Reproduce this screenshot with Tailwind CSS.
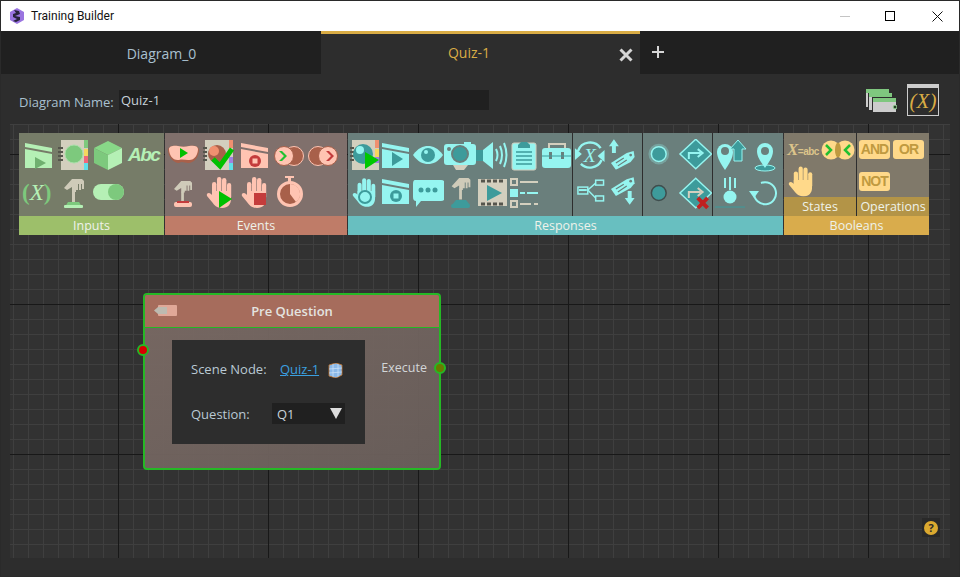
<!DOCTYPE html>
<html lang="en">
<head>
<meta charset="UTF-8">
<title>Training Builder</title>
<script src="https://cdn.jsdelivr.net/npm/@tailwindcss/browser@4"></script>
</head>
<body class="bg-[#2d2d2d] overflow-hidden">
<!-- shared icon parts -->
<svg class="absolute w-0 h-0">
  <defs>
    <symbol id="clapper" viewBox="0 0 28 28">
      <path d="M0 8 27 13V27H0Z" fill="currentColor"/>
      <path d="M0 2 27 7V11L0 6Z" fill="currentColor"/>
    </symbol>
    <symbol id="hand" viewBox="0 0 26 32">
      <g fill="currentColor">
        <rect x="6" y="6" width="4.4" height="18" rx="2.2"/>
        <rect x="11" y="1" width="4.4" height="20" rx="2.2"/>
        <rect x="16" y="2" width="4.4" height="20" rx="2.2"/>
        <rect x="21" y="7" width="4.2" height="16" rx="2.1"/>
        <path d="M6 15H25V23C25 28 22 32 16 32 11 32 8 29 6 26L1 20C0 17 3 16 5 18L6 19Z"/>
      </g>
    </symbol>
    <symbol id="joystick" viewBox="0 0 20 32">
      <path d="M0 11 8 2H18L20 4V12H18V7H17V13H15V7H14V13H12V15H8V10L3 13Z" fill="#cfcbb9"/>
      <rect x="8" y="14" width="3" height="11" fill="#cfcbb9"/>
    </symbol>
    <symbol id="tag" viewBox="0 0 26 20">
      <path d="M1 13 17 3 24 1 25 7 21 12 6 20Z" fill="currentColor"/>
      <path d="M6 13 14 8M8 16 17 10" stroke="#6a7f7c" stroke-width="1.2"/>
      <circle cx="21" cy="5" r="1.4" fill="#6a7f7c"/>
    </symbol>
  </defs>
</svg>

<div class="w-[960px] h-[577px] flex flex-col border border-[#2a2a2a] font-['Open_Sans',sans-serif]">

  <!-- title bar -->
  <div class="h-[30px] bg-white flex items-center shrink-0">
    <svg class="ml-[8px] w-[16px] h-[16px]" viewBox="0 0 16 16">
      <path d="M8 0 15 4V12L8 16 1 12V4Z" fill="#9a74e0"/>
      <path d="M5 2 10 3 11 6 6 8 11 9 11 12 7 14 4 13 8 11 4 9 4 6 7 5Z" fill="#26223a"/>
    </svg>
    <span class="ml-[6px] text-[12px] text-[#111] font-['Roboto',sans-serif]">Training Builder</span>
    <div class="ml-auto flex items-center">
      <div class="w-[10px] h-px bg-[#c4c4c4]"></div>
      <div class="ml-[35px] w-[10px] h-[10px] border border-black"></div>
      <svg class="ml-[37px] mr-[16px] w-[11px] h-[11px]" viewBox="0 0 11 11"><path d="M.5.5 10.5 10.5M10.5.5.5 10.5" stroke="#111" stroke-width="1"/></svg>
    </div>
  </div>

  <!-- tabs -->
  <div class="h-[43px] bg-[#202020] flex shrink-0 pl-px">
    <div class="w-[319px] pt-px flex items-center justify-center text-[14px] text-[#a9c0d0]">Diagram_0</div>
    <div class="relative w-[319px] bg-[#2d2d2d] border-t-[3px] border-[#d9ac45] pr-[23px] pb-[3px] flex items-center justify-center text-[14px] text-[#d9ac45]">
      Quiz-1
      <svg class="absolute right-[7px] top-[14px] w-[14px] h-[14px]" viewBox="0 0 14 14"><path d="M1.500 1.500 12.500 12.500M12.500 1.500 1.500 12.500" stroke="#d6d6d6" stroke-width="3"/></svg>
    </div>
    <svg class="ml-[11px] mt-[14px] w-[14px] h-[14px]" viewBox="0 0 14 14"><path d="M7 1V13M1 7H13" stroke="#d6d6d6" stroke-width="2"/></svg>
  </div>

  <!-- diagram name row -->
  <div class="h-[50px] flex shrink-0 pl-[18px] pr-[20px] relative">
    <span class="mt-[19px] text-[13px] leading-[18px] text-[#a9c0d0]">Diagram Name:</span>
    <div class="absolute left-[118px] top-[16px] w-[370px] h-[20px] bg-[#202020] pl-[2px] text-[13px] leading-[20px] text-[#c6d2da]">Quiz-1</div>
    <div class="ml-auto flex">
      <svg class="mt-[15px] w-[31px] h-[24px]" viewBox="0 0 31 24">
        <rect x="0" y="0" width="23" height="18" fill="#ccc"/><rect x="0" y="0" width="23" height="4" fill="#7fc77f"/>
        <rect x="2" y="4" width="24" height="16" fill="#2d2d2d"/>
        <rect x="3" y="4" width="23" height="17" fill="#ccc"/><rect x="3" y="4" width="23" height="4" fill="#7fc77f"/>
        <rect x="6" y="8" width="25" height="16" fill="#2d2d2d"/>
        <rect x="7" y="9" width="23" height="14" fill="#ccc"/><rect x="7" y="9" width="23" height="4" fill="#7fc77f"/>
        <circle cx="29" cy="18" r="2" fill="#264026" stroke="#a5e0a5"/>
      </svg>
      <div class="ml-[10px] mt-[10px] w-[32px] h-[32px] border border-[#ccc] border-t-[4px] flex items-center justify-center text-[#d9ac45] font-['Liberation_Serif',serif] italic text-[21px] leading-none">(X)</div>
    </div>
  </div>

  <!-- diagram canvas -->
  <div class="relative ml-[9px] w-[940px] h-[434px] shrink-0 bg-[#323232] bg-[linear-gradient(#181818_1px,transparent_1px),linear-gradient(90deg,#181818_1px,transparent_1px),linear-gradient(#3f3f3f_1px,transparent_1px),linear-gradient(90deg,#3f3f3f_1px,transparent_1px)] bg-[size:150px_150px,150px_150px,15px_15px,15px_15px] bg-[position:0_30px,108px_0,0_0,3px_0]">

    <!-- palette -->
    <div class="ml-[9px] pt-[9px] flex w-[910px] text-[12.5px] text-[#eef2ea]">

      <!-- inputs -->
      <div class="w-[145px] mr-px flex flex-col">
        <div class="h-[83px] bg-[#767c68] pl-[3px] pt-[6px]">
          <div class="flex h-[36px]">
            <svg class="w-[35px] h-[36px]" viewBox="0 0 35 36"><use href="#clapper" x="3" y="2" width="28" height="28" color="#b5f0b5"/><path d="M13 18 24 24 13 30Z" fill="#6fb06f"/></svg>
            <svg class="w-[35px] h-[36px]" viewBox="0 0 35 36"><rect x="4" y="1" width="27" height="30" fill="#d3cfbe"/><path d="M1 9H6M1 13H6M1 17H6M1 21H6" stroke="#55554c" stroke-width="2"/><circle cx="17" cy="15" r="9" fill="#7dc97d" stroke="#a8dfa8"/><rect x="27" y="1" width="4" height="8" fill="#7dc97d"/><rect x="27" y="10" width="4" height="7" fill="#f5d75e"/><rect x="27" y="17" width="4" height="7" fill="#f0667a"/><rect x="27" y="24" width="4" height="7" fill="#5ee0ea"/></svg>
            <svg class="w-[35px] h-[36px]" viewBox="0 0 35 36"><path d="M16 2 30 9 16 16 2 9Z" fill="#88d888"/><path d="M2 9 16 16V31L2 24Z" fill="#7dc97d"/><path d="M30 9 16 16V31L30 24Z" fill="#b5f0b5"/></svg>
            <span class="w-[35px] pl-px pt-px text-[19px] leading-[30px] font-bold italic tracking-[-1.5px] text-[#b5f0b5] font-['Liberation_Sans',sans-serif]">Abc</span>
          </div>
          <div class="flex h-[36px]">
            <span class="w-[35px] pt-[3px] text-[23px] leading-[30px] text-[#b5f0b5] font-['Liberation_Serif',serif] italic whitespace-nowrap"><span class="text-[#7dc97d] font-bold not-italic">(</span>X<span class="text-[#7dc97d] font-bold not-italic">)</span></span>
            <svg class="w-[35px] h-[36px]" viewBox="0 0 35 36"><use href="#joystick" x="7" y="2" width="20" height="32"/><path d="M11 27H22L25 32H8Z" fill="#7dc97d"/><rect x="7" y="30" width="19" height="3" rx="1" fill="#b5f0b5"/></svg>
            <svg class="w-[35px] h-[36px]" viewBox="0 0 35 36"><rect x="1" y="9" width="31" height="16" rx="8" fill="#b5f0b5"/><circle cx="24" cy="17" r="8" fill="#7dc97d"/></svg>
          </div>
        </div>
        <div class="h-[19px] bg-[#9dbf6a] text-center leading-[19px]">Inputs</div>
      </div>

      <!-- events -->
      <div class="w-[182px] mr-px flex flex-col">
        <div class="h-[83px] bg-[#80706c] pl-px pt-[6px]">
          <div class="flex h-[36px]">
            <svg class="w-[35px] h-[36px]" viewBox="0 0 35 36"><path d="M2 11C2 7 8 6 12 7 16 8 19 8 23 7 28 6 33 7 33 11 33 17 29 24 22 24 19 24 16 22 13 24 7 24 2 17 2 11Z" fill="#a8604a"/><path d="M3 10C3 7 8 6 12 7 16 8 19 8 23 7 28 6 32 7 32 10 32 16 28 22 22 21 19 21 16 20 13 21 7 22 3 16 3 10Z" fill="#ffc4b2"/><path d="M14 9 22 14 14 19Z" fill="#00c000"/></svg>
            <svg class="w-[35px] h-[36px]" viewBox="0 0 35 36"><rect x="4" y="1" width="28" height="30" fill="#d3cfbe"/><path d="M2 9H6M2 13H6M2 17H6M2 21H6" stroke="#55554c" stroke-width="2"/><circle cx="16" cy="15" r="9" fill="#a8604a"/><circle cx="13" cy="12" r="5" fill="#f09070"/><rect x="28" y="1" width="4" height="8" fill="#f09070"/><rect x="28" y="18" width="4" height="7" fill="#a080e0"/><rect x="28" y="24" width="4" height="7" fill="#5ee0ea"/><path d="M12 20 19 27 31 10" fill="none" stroke="#00c000" stroke-width="5"/></svg>
            <svg class="w-[35px] h-[36px]" viewBox="0 0 35 36"><use href="#clapper" x="5" y="2" width="28" height="28" color="#ffc4b2"/><circle cx="19" cy="22" r="6" fill="#c43c3c"/><rect x="16.500" y="19.500" width="5" height="5" fill="#ffc4b2"/></svg>
            <svg class="w-[35px] h-[36px]" viewBox="0 0 35 36"><circle cx="23" cy="17" r="9.500" fill="#a8604a" stroke="#ffc4b2"/><circle cx="13" cy="17" r="9.500" fill="#ffc4b2" stroke="#a8604a"/><path d="M8 12H11L16 17 11 22H8L13 17Z" fill="#22c030"/></svg>
            <svg class="w-[35px] h-[36px]" viewBox="0 0 35 36"><circle cx="12" cy="17" r="9.500" fill="#a8604a" stroke="#ffc4b2"/><circle cx="22" cy="17" r="9.500" fill="#ffc4b2" stroke="#a8604a"/><path d="M20 12H23L28 17 23 22H20L25 17Z" fill="#c43c3c"/></svg>
          </div>
          <div class="flex h-[36px]">
            <svg class="w-[35px] h-[36px]" viewBox="0 0 35 36"><use href="#joystick" x="8" y="4" width="18" height="29"/><rect x="8" y="27" width="18" height="5" rx="2" fill="#ffc4b2"/><rect x="11" y="26" width="12" height="2" fill="#c43c3c"/></svg>
            <svg class="w-[35px] h-[36px]" viewBox="0 0 35 36"><use href="#hand" x="5" y="1" width="26" height="32" color="#ffc4b2"/><path d="M18 16 31 24 18 33Z" fill="#00c000"/></svg>
            <svg class="w-[35px] h-[36px]" viewBox="0 0 35 36"><use href="#hand" x="5" y="1" width="26" height="32" color="#ffc4b2"/><rect x="18" y="18" width="12" height="12" fill="#c43c3c"/></svg>
            <svg class="w-[35px] h-[36px]" viewBox="0 0 35 36"><rect x="14" y="1" width="9" height="2" fill="#ffc4b2"/><rect x="17" y="3" width="3" height="4" fill="#ffc4b2"/><circle cx="19" cy="19" r="11.500" fill="#a8604a" stroke="#ffc4b2" stroke-width="3"/><path d="M19 19V9A10 10 0 0 1 25 27Z" fill="#ffc4b2"/></svg>
          </div>
        </div>
        <div class="h-[19px] bg-[#bf7c68] text-center leading-[19px]">Events</div>
      </div>

      <!-- responses -->
      <div class="w-[435px] mr-px flex flex-col">
        <div class="h-[83px] bg-[#6a7f7c] flex">
          <div class="w-[225px] pt-[6px] border-r border-[#2d2d2d]">
            <div class="flex h-[36px]">
              <svg class="w-[32px] h-[36px]" viewBox="0 0 32 36"><rect x="4" y="1" width="27" height="30" fill="#d3cfbe"/><path d="M2 9H6M2 13H6M2 17H6M2 21H6" stroke="#55554c" stroke-width="2"/><circle cx="15" cy="15" r="10" fill="#3d9b9b"/><circle cx="12" cy="11" r="4" fill="#95f5f0"/><rect x="27" y="1" width="4" height="8" fill="#f09070"/><rect x="27" y="10" width="4" height="8" fill="#f5d75e"/><rect x="27" y="18" width="4" height="6" fill="#a080e0"/><path d="M17 13 31 21 17 30Z" fill="#00c800"/></svg>
              <svg class="w-[32px] h-[36px]" viewBox="0 0 32 36"><use href="#clapper" x="2" y="2" width="28" height="28" color="#95f5f0"/><path d="M12 13 23 20 12 27Z" fill="#3d9b9b"/></svg>
              <svg class="w-[32px] h-[36px]" viewBox="0 0 32 36"><path d="M1 16C6 9 11 7 16 7S26 9 31 16C26 23 21 25 16 25S6 23 1 16Z" fill="#95f5f0"/><circle cx="16" cy="16" r="7" fill="#3d9b9b"/><circle cx="14" cy="13" r="2" fill="#95f5f0"/></svg>
              <svg class="w-[32px] h-[36px]" viewBox="0 0 32 36"><rect x="20" y="3" width="7" height="3" fill="#95f5f0"/><rect x="0" y="5" width="32" height="21" rx="3" fill="#95f5f0"/><circle cx="16" cy="15" r="8" fill="#3d9b9b" stroke="#6a7f7c" stroke-width="2"/><circle cx="5" cy="10" r="2" fill="#6a7f7c"/><path d="M9 26H24L20 31H12Z" fill="#d3cfbe"/></svg>
              <svg class="w-[32px] h-[36px]" viewBox="0 0 32 36"><rect x="0" y="11" width="7" height="11" fill="#3d9b9b"/><path d="M7 11 17 3V30L7 22Z" fill="#95f5f0"/><path d="M20 10Q23 16 20 22M24 7Q28 16 24 25M28 4Q33 16 28 28" fill="none" stroke="#95f5f0" stroke-width="2"/></svg>
              <svg class="w-[32px] h-[36px]" viewBox="0 0 32 36"><rect x="4" y="4" width="24" height="27" rx="2" fill="#95f5f0" stroke="#d3cfbe"/><path d="M10 6 13 3H19L22 6V9H10Z" fill="#3d9b9b"/><path d="M8 13H24M8 17H24M8 21H24M8 25H24" stroke="#3d9b9b" stroke-width="1.500"/></svg>
              <svg class="w-[32px] h-[36px]" viewBox="0 0 32 36"><path d="M9 10V5H25V10" fill="none" stroke="#d3cfbe" stroke-width="2"/><rect x="2" y="9" width="29" height="20" rx="3" fill="#95f5f0"/><rect x="9" y="13" width="3" height="7" fill="#6a7f7c"/><rect x="21" y="13" width="3" height="7" fill="#6a7f7c"/><path d="M2 17H31" stroke="#3d9b9b"/></svg>
            </div>
            <div class="flex h-[36px]">
              <svg class="w-[32px] h-[36px]" viewBox="0 0 32 36"><use href="#hand" x="4" y="1" width="24" height="32" color="#95f5f0"/><circle cx="17" cy="22" r="6" fill="none" stroke="#3d9b9b" stroke-width="2"/></svg>
              <svg class="w-[32px] h-[36px]" viewBox="0 0 32 36"><use href="#clapper" x="2" y="2" width="28" height="28" color="#95f5f0"/><circle cx="16" cy="21" r="6" fill="#3d9b9b"/><rect x="13.500" y="18.500" width="5" height="5" fill="#95f5f0"/></svg>
              <svg class="w-[32px] h-[36px]" viewBox="0 0 32 36"><path d="M3 5H29Q33 5 33 9V22Q33 26 29 26H9L4 32V26Q1 26 1 22V9Q1 5 3 5Z" fill="#95f5f0"/><circle cx="9" cy="15" r="2.500" fill="#3d9b9b"/><circle cx="16" cy="15" r="2.500" fill="#3d9b9b"/><circle cx="23" cy="15" r="2.500" fill="#3d9b9b"/></svg>
              <svg class="w-[32px] h-[36px]" viewBox="0 0 32 36"><use href="#joystick" x="7" y="1" width="20" height="30"/><path d="M12 25H22L26 30H8Z" fill="#3d9b9b"/><rect x="7" y="29" width="19" height="4" rx="2" fill="#3d9b9b"/></svg>
              <svg class="w-[32px] h-[36px]" viewBox="0 0 32 36"><rect x="2" y="4" width="29" height="27" fill="#d3cfbe"/><path d="M5 6H28M5 29H28" stroke="#55554c" stroke-width="3" stroke-dasharray="4 2"/><path d="M11 10 26 18 11 26Z" fill="#3d9b9b"/></svg>
              <svg class="w-[32px] h-[36px]" viewBox="0 0 32 36"><rect x="3" y="4" width="6" height="6" fill="none" stroke="#d3cfbe" stroke-width="2"/><rect x="12" y="6" width="18" height="2" fill="#d3cfbe"/><rect x="2" y="14" width="8" height="8" fill="#95f5f0"/><rect x="12" y="17" width="5" height="2" fill="#95f5f0"/><rect x="19" y="17" width="11" height="2" fill="#95f5f0"/><rect x="3" y="26" width="6" height="6" fill="none" stroke="#d3cfbe" stroke-width="2"/><rect x="12" y="28" width="11" height="2" fill="#d3cfbe"/><rect x="26" y="28" width="4" height="2" fill="#d3cfbe"/></svg>
            </div>
          </div>
          <div class="w-[70px] pt-[6px] border-r border-[#2d2d2d]">
            <div class="flex h-[36px]">
              <svg class="w-[35px] h-[36px]" viewBox="0 0 35 36"><path d="M5 12A13 13 0 0 1 28 9M29 21A13 13 0 0 1 8 25" fill="none" stroke="#95f5f0" stroke-width="2.500"/><path d="M2 9V21L9 15ZM32 11V23L25 17Z" fill="#95f5f0"/><text x="17" y="23" text-anchor="middle" font-family="Liberation Serif" font-style="italic" font-size="20" fill="#95f5f0">X</text></svg>
              <svg class="w-[35px] h-[36px]" viewBox="0 0 35 36"><path d="M6 0 11 7H8V14H4V7H1Z" fill="#95f5f0"/><use href="#tag" x="2" y="11" width="26" height="20" color="#95f5f0"/></svg>
            </div>
            <div class="flex h-[36px]">
              <svg class="w-[35px] h-[36px]" viewBox="0 0 35 36"><g fill="none" stroke="#95f5f0" stroke-width="1.500"><rect x="5" y="12" width="10" height="7"/><rect x="23" y="5" width="8" height="5"/><rect x="23" y="21" width="8" height="5"/><path d="M15 15 23 8M15 15 23 23"/></g><rect x="6" y="14" width="8" height="2" fill="#95f5f0"/></svg>
              <svg class="w-[35px] h-[36px]" viewBox="0 0 35 36"><use href="#tag" x="2" y="1" width="26" height="20" color="#95f5f0"/><path d="M22 30 27 23H24V16H20V23H17Z" fill="#95f5f0"/></svg>
            </div>
          </div>
          <div class="w-[70px] pt-[6px] border-r border-[#2d2d2d]">
            <div class="flex h-[36px]">
              <svg class="w-[35px] h-[36px]" viewBox="0 0 35 36"><circle cx="16" cy="15" r="10.500" fill="#95f5f0" opacity=".3"/><circle cx="16" cy="15" r="7.500" fill="#3d9b9b" stroke="#95f5f0" stroke-width="1.500"/></svg>
              <svg class="w-[35px] h-[36px]" viewBox="0 0 35 36"><path d="M18 0 34 15 18 30 2 15Z" fill="#3d9b9b" stroke="#95f5f0" stroke-width="1.500"/><path d="M11 20V14H23M20 10 25 14 20 18" fill="none" stroke="#95f5f0" stroke-width="2"/></svg>
            </div>
            <div class="flex h-[36px]">
              <svg class="w-[35px] h-[36px]" viewBox="0 0 35 36"><circle cx="16" cy="18" r="7.500" fill="#3d9b9b" stroke="#3f4d4d" stroke-width="1.500"/></svg>
              <svg class="w-[35px] h-[36px]" viewBox="0 0 35 36"><path d="M18 3 34 18 18 33 2 18Z" fill="#3d9b9b" stroke="#95f5f0" stroke-width="1.500"/><path d="M11 23V17H23M20 13 25 17 20 21" fill="none" stroke="#d3cfbe" stroke-width="2"/><path d="M20 23 30 33M30 23 20 33" stroke="#c02020" stroke-width="4"/></svg>
            </div>
          </div>
          <div class="w-[70px] pt-[6px]">
            <div class="flex h-[36px]">
              <svg class="w-[35px] h-[36px]" viewBox="0 0 35 36"><path d="M12 31C8 25 4 19 4 13A8 8 0 0 1 20 13C20 19 16 25 12 31Z" fill="#95f5f0"/><circle cx="12" cy="12" r="4" fill="#6a7f7c"/><path d="M25 1 33 10H29V22H21V10H17Z" fill="#3d9b9b" stroke="#95f5f0"/></svg>
              <svg class="w-[35px] h-[36px]" viewBox="0 0 35 36"><ellipse cx="17" cy="29" rx="10" ry="3" fill="#3d9b9b" stroke="#95f5f0"/><path d="M17 29C13 23 9 18 9 12A8 8 0 0 1 25 12C25 18 21 23 17 29Z" fill="#95f5f0"/><circle cx="17" cy="12" r="4" fill="#6a7f7c"/></svg>
            </div>
            <div class="flex h-[36px]">
              <svg class="w-[35px] h-[36px]" viewBox="0 0 35 36"><path d="M12 3V13M17 2V15M22 3V13" stroke="#95f5f0" stroke-width="2"/><circle cx="17" cy="22" r="6.500" fill="#95f5f0"/><path d="M2 32H32" stroke="#3d9b9b"/></svg>
              <svg class="w-[35px] h-[36px]" viewBox="0 0 35 36"><path d="M6 18A11 11 0 1 0 13 8" fill="none" stroke="#95f5f0" stroke-width="2"/><path d="M1 16H11L6 23Z" fill="#95f5f0"/></svg>
            </div>
          </div>
        </div>
        <div class="h-[19px] bg-[#68bfc0] text-center leading-[19px]">Responses</div>
      </div>

      <!-- booleans -->
      <div class="w-[145px] flex flex-col">
        <div class="flex h-[83px]">
          <div class="w-[73px] border-r border-[#2d2d2d] flex flex-col">
            <div class="h-[64px] bg-[#80796a] pl-[3px] pt-[7px]">
              <div class="flex h-[20px]">
                <span class="w-[34px] whitespace-nowrap font-['Liberation_Sans',sans-serif] text-[#dcc48a] text-[10px] tracking-[-0.5px] leading-[20px] font-bold"><span class="text-[17px] italic font-['Liberation_Serif',serif]">X</span>=abc</span>
                <svg class="w-[34px] h-[20px]" viewBox="0 0 34 20"><circle cx="10" cy="10" r="9.500" fill="#ffd98a"/><circle cx="24" cy="10" r="9.500" fill="#ffd98a"/><ellipse cx="17" cy="10" rx="3" ry="7.500" fill="#c09a40"/><path d="M5 5 10 10 5 15M29 5 24 10 29 15" fill="none" stroke="#22c030" stroke-width="2.500"/></svg>
              </div>
              <svg class="ml-[1px] mt-[5px] w-[25px] h-[32px]" viewBox="0 0 26 32"><use href="#hand" width="26" height="32" color="#ffd98a"/></svg>
            </div>
            <div class="h-[19px] bg-[#b39447] text-center leading-[19px]">States</div>
          </div>
          <div class="flex-1 flex flex-col">
            <div class="h-[64px] bg-[#80796a] pl-[2px] pt-[7px] text-[#c09a40] font-['Liberation_Sans',sans-serif] font-bold text-[14px] tracking-[-1px] leading-[19px]">
              <div class="flex gap-[3px]">
                <div class="w-[31px] h-[19px] rounded-[3px] bg-[#ffd98a] text-center">AND</div>
                <div class="w-[31px] h-[19px] rounded-[3px] bg-[#ffd98a] text-center">OR</div>
              </div>
              <div class="mt-[13px] w-[31px] h-[19px] rounded-[3px] bg-[#ffd98a] text-center">NOT</div>
            </div>
            <div class="h-[19px] bg-[#b39447] text-center leading-[19px]">Operations</div>
          </div>
        </div>
        <div class="h-[19px] bg-[#d9ac4c] text-center leading-[19px]">Booleans</div>
      </div>
    </div>

    <!-- node -->
    <div class="absolute left-[133px] top-[169px] w-[298px] h-[177px] border-2 border-[#25b825] rounded-[4px] bg-linear-to-br from-[#7a6a64]/95 to-[#6a5f5b]/95">
      <div class="relative h-[33px] bg-[#a66c5c] border-b border-[#25b825] rounded-t-[2px] text-center text-[13px] font-semibold leading-[32px] text-[#e4e4e0]">
        Pre Question
        <svg class="absolute left-[9px] top-[9px] w-[24px] h-[13px]" viewBox="0 0 24 13"><rect x="4" y="1" width="19" height="11" rx="1" fill="#e0a898"/><path d="M0 6.500 4 3H13V10H4Z" fill="#bdbab0"/></svg>
      </div>
      <div class="absolute left-[27px] top-[45px] w-[193px] h-[104px] bg-[#2d2d2d] text-[13px] text-[#b9c9d4]">
        <div class="flex h-[22px] mt-[19px] pl-[19px] items-center">
          <span class="w-[89px]">Scene Node:</span>
          <span class="text-[#3ba0e0] underline">Quiz-1</span>
          <svg class="ml-[9px] w-[15px] h-[15px]" viewBox="0 0 15 15"><path d="M1 2 8 0 14 2V12L8 15 1 13Z" fill="#8ab8e8" stroke="#c87830" stroke-width=".8"/><path d="M5 1V14M10 1V14M1 6 14 5M1 10 14 9" stroke="#d0e4f8" stroke-width=".7"/></svg>
        </div>
        <div class="flex h-[21px] mt-[22px] pl-[19px] items-center">
          <span class="w-[81px] pt-[2px]">Question:</span>
          <div class="relative w-[73px] h-[21px] bg-[#202020] pl-[5px] leading-[23px] text-[#c6d2da]">
            Q1
            <svg class="absolute right-[3px] top-[5px] w-[12px] h-[11px]" viewBox="0 0 12 11"><path d="M0 0H12L6 11Z" fill="#dcdcdc"/></svg>
          </div>
        </div>
      </div>
      <span class="absolute right-[12px] top-[64px] text-[12.5px] leading-[18px] text-[#d2d6d8]">Execute</span>
      <div class="absolute -left-[8px] top-[49px] w-[12px] h-[12px] rounded-full bg-[#d80000] border-2 border-[#25b825]"></div>
      <div class="absolute -right-[7px] top-[67px] w-[12px] h-[12px] rounded-full bg-[#6b7a00] border-2 border-[#25b825]"></div>
    </div>

    <!-- help button -->
    <div class="absolute left-[912px] top-[394px] w-[18px] h-[19px] bg-[#292929] flex items-center justify-center">
      <div class="w-[14px] h-[14px] rounded-full bg-[#dba92f] text-[#2a2a2a] text-[11px] font-bold leading-[14px] text-center">?</div>
    </div>
  </div>
</div>
</body>
</html>
